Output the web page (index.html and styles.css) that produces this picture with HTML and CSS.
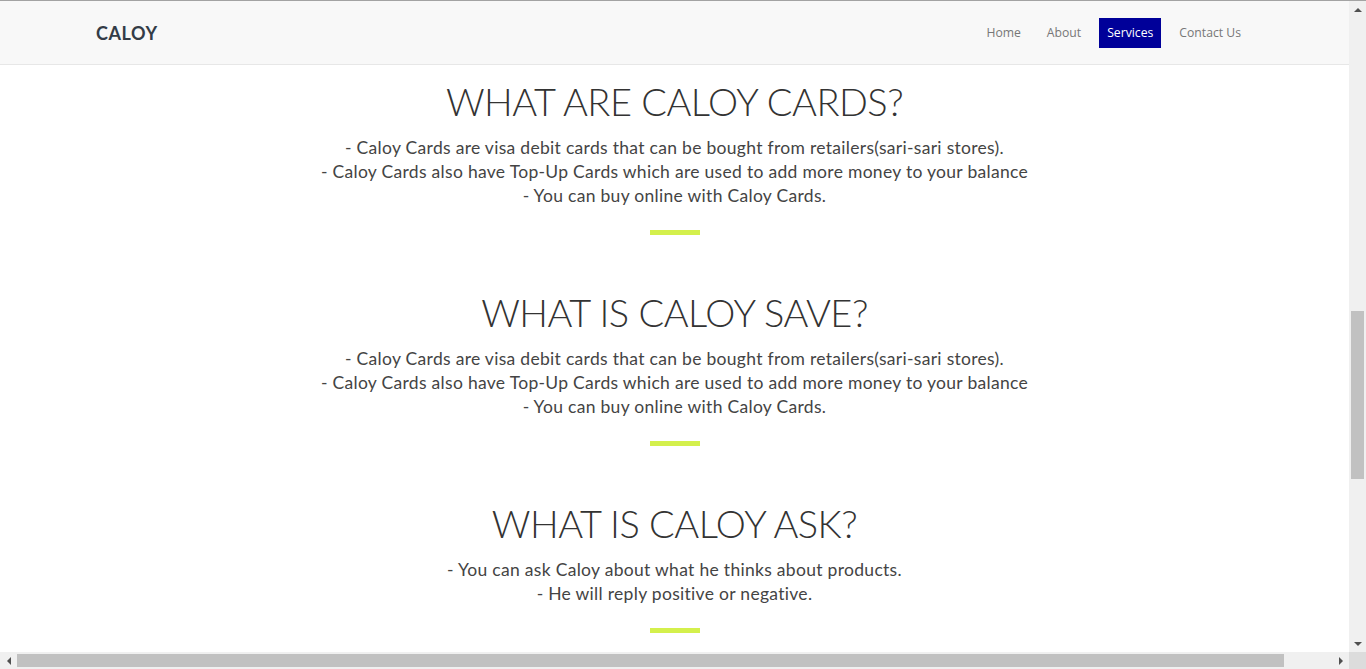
FILE: index.html
```html
<!DOCTYPE html>
<html lang="en">
<head>
<meta charset="utf-8">
<title>Caloy - Services</title>
<link rel="stylesheet" href="styles.css">
</head>
<body>
<div class="window">
  <div class="viewport">
    <nav class="navbar">
      <a class="brand" href="#">CALOY</a>
      <ul class="nav">
        <li><a href="#">Home</a></li>
        <li><a href="#">About</a></li>
        <li><a class="active" href="#">Services</a></li>
        <li><a href="#">Contact Us</a></li>
      </ul>
    </nav>
    <main class="content">
      <section class="service">
        <h2>WHAT ARE CALOY CARDS?</h2>
        <p>- Caloy Cards are visa debit cards that can be bought from retailers(sari-sari stores).<br>- Caloy Cards also have Top-Up Cards which are used to add more money to your balance<br>- You can buy online with Caloy Cards.</p>
        <div class="divider"></div>
      </section>
      <section class="service">
        <h2>WHAT IS CALOY SAVE?</h2>
        <p>- Caloy Cards are visa debit cards that can be bought from retailers(sari-sari stores).<br>- Caloy Cards also have Top-Up Cards which are used to add more money to your balance<br>- You can buy online with Caloy Cards.</p>
        <div class="divider"></div>
      </section>
      <section class="service">
        <h2>WHAT IS CALOY ASK?</h2>
        <p>- You can ask Caloy about what he thinks about products.<br>- He will reply positive or negative.</p>
        <div class="divider"></div>
      </section>
    </main>
  </div>
  <div class="vscroll">
    <span class="arrow arrow-up"></span>
    <div class="vtrack"><div class="vthumb"></div></div>
    <span class="arrow arrow-down"></span>
  </div>
  <div class="hscroll">
    <span class="arrow arrow-left"></span>
    <div class="htrack"><div class="hthumb"></div></div>
    <span class="arrow arrow-right"></span>
  </div>
  <div class="corner"></div>
</div>
</body>
</html>
```

FILE: styles.css
```css
* { box-sizing: border-box; }
html, body { margin: 0; padding: 0; }
body { background: #fff; overflow: hidden; }

.window {
  width: 1366px;
  height: 669px;
  border-top: 1px solid #a3a3a3;
  display: grid;
  grid-template-columns: 1fr 17px;
  grid-template-rows: 1fr 17px;
}

.viewport {
  overflow: hidden;
  background: #fff;
}

.navbar {
  height: 64px;
  background: #f8f8f8;
  border-bottom: 1px solid #e7e7e7;
  display: flex;
  align-items: center;
  justify-content: space-between;
  padding: 0 100px 0 96px;
}

.brand {
  font-family: "Lato", "DejaVu Sans", sans-serif;
  font-weight: 700;
  font-size: 18px;
  letter-spacing: 0.6px;
  color: #333c47;
  text-decoration: none;
}

.nav {
  list-style: none;
  margin: 0;
  padding: 0;
  display: flex;
  gap: 10px;
}

.nav a {
  display: block;
  font-family: "Open Sans", "Liberation Sans", sans-serif;
  font-size: 12.2px;
  line-height: 30px;
  padding: 0 8px;
  color: #777;
  text-decoration: none;
}

.nav a.active {
  background: #000099;
  color: #fff;
}

.content {
  padding-top: 13px;
  text-align: center;
  color: #333;
}

.service {
  display: flex;
  flex-direction: column;
  align-items: center;
  padding-bottom: 54px;
}

.service h2 {
  margin: 0;
  font-family: "Lato", "DejaVu Sans", sans-serif;
  font-weight: 300;
  font-size: 38px;
  line-height: 46px;
  letter-spacing: -0.5px;
  color: #333;
}

.service p {
  margin: 12px 0 0;
  font-family: "Lato", "DejaVu Sans", sans-serif;
  font-weight: 400;
  font-size: 17.5px;
  line-height: 24px;
  letter-spacing: 0.3px;
  color: #444;
}

.divider {
  width: 50px;
  height: 5px;
  background: #d4f04c;
  margin-top: 22px;
}

.vscroll {
  background: #f0f0f0;
  display: flex;
  flex-direction: column;
  align-items: center;
}

.vtrack {
  flex: 1;
  width: 100%;
  padding: 0 2px;
}

.vthumb {
  margin-top: 293px;
  height: 168px;
  background: #c1c1c1;
}

.hscroll {
  background: #f0f0f0;
  display: flex;
  align-items: center;
}

.htrack {
  flex: 1;
  height: 100%;
  padding: 2px 0;
}

.hthumb {
  width: 1267px;
  height: 100%;
  background: #c1c1c1;
}

.corner { background: #dcdcdc; }

.arrow {
  flex: none;
  width: 17px;
  height: 17px;
  position: relative;
}

.arrow::after {
  content: "";
  position: absolute;
  left: 50%;
  top: 50%;
  width: 0;
  height: 0;
  border: 4px solid transparent;
}

.arrow-up::after { border-bottom-color: #505050; border-top-width: 0; transform: translate(-50%, -50%); }
.arrow-down::after { border-top-color: #505050; border-bottom-width: 0; transform: translate(-50%, -50%); }
.arrow-left::after { border-right-color: #505050; border-left-width: 0; transform: translate(-50%, -50%); }
.arrow-right::after { border-left-color: #505050; border-right-width: 0; transform: translate(-50%, -50%); }
```
